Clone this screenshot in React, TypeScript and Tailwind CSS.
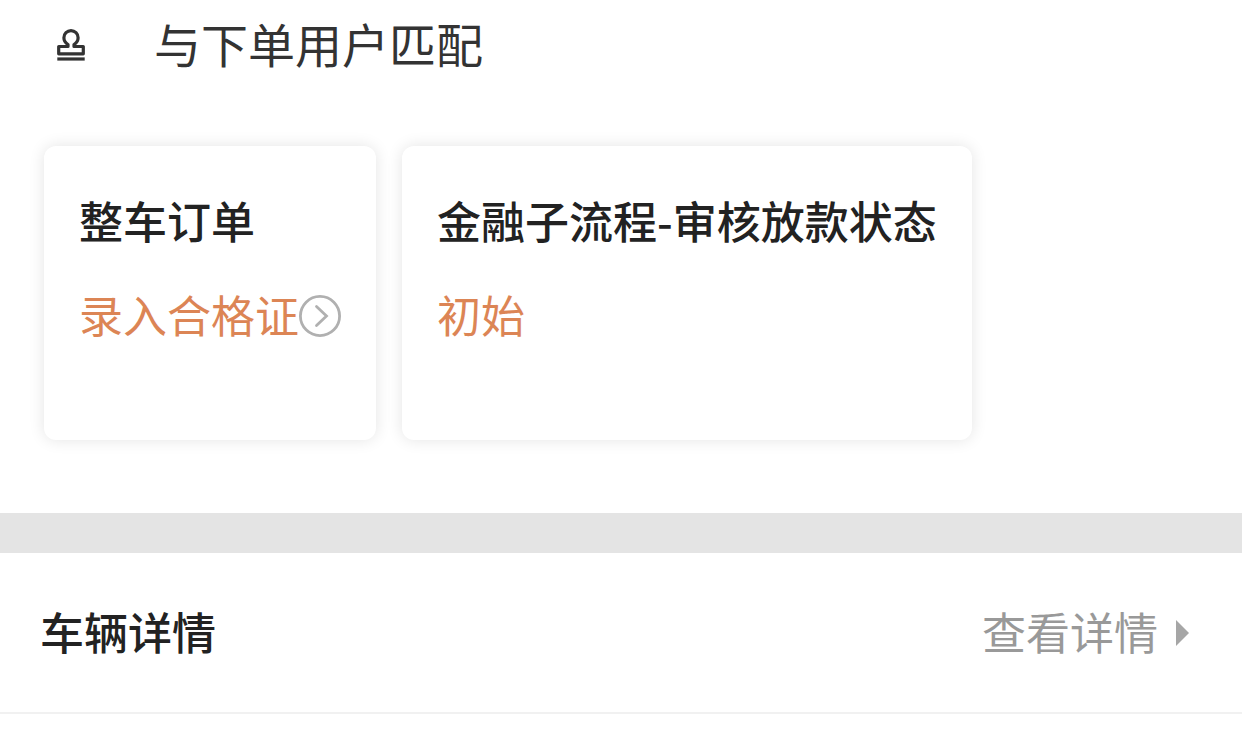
import type { ReactNode } from "react";

function StampIcon() {
  return (
    <svg viewBox="0 0 30 34" className="h-[34px] w-[30px] shrink-0" fill="none" stroke="#333333" strokeWidth="3.2" strokeLinejoin="round" aria-hidden="true">
      <path d="M12 18.500V16.500C9.500 15 7.900 12.500 7.900 9.700a7.100 7.100 0 0 1 14.200 0c0 2.800-1.600 5.300-4.100 6.800v2h9.300v7.300H2.700v-7.300z" />
      <path d="M1.300 31H28.700" />
    </svg>
  );
}

function Card({ title, children }: { title: string; children: ReactNode }) {
  return (
    <article className="h-[294px] rounded-xl bg-white px-[35px] pt-11 shadow-[0_0_16px_rgba(0,0,0,0.11)]">
      <h2 className="text-[44px] leading-[60px] font-medium text-[#222222]">{title}</h2>
      <div className="mt-[34px] flex items-center text-[44px] leading-[60px] text-[#dc8555]">{children}</div>
    </article>
  );
}

export default function App() {
  return (
    <main className="min-h-screen overflow-hidden bg-white font-['Noto_Sans_CJK_SC',sans-serif]">
      <section className="flex items-start gap-[68px] px-14 pt-2">
        <div className="pt-5">
          <StampIcon />
        </div>
        <p className="text-[47px] leading-[70px] text-[#333333]">与下单用户匹配</p>
      </section>
      <section className="flex items-start gap-[26px] px-11 pt-[68px] pb-[73px]">
        <Card title="整车订单">
          <span>录入合格证</span>
          <button type="button" aria-label="录入合格证" className="pt-1">
            <svg viewBox="0 0 42 42" className="size-[42px]" fill="none" stroke="#b0b0b0" strokeWidth="2.8" strokeLinecap="round" aria-hidden="true">
              <circle cx="21" cy="21" r="19.600" />
              <path d="M17.500 11.500l10 9.500-10 9.500" />
            </svg>
          </button>
        </Card>
        <Card title="金融子流程-审核放款状态">
          <span>初始</span>
        </Card>
      </section>
      <div className="h-10 bg-[#e4e4e4]" />
      <section className="flex h-[161px] items-center justify-between border-b-2 border-[#f1f1f1] pr-[53px] pb-1 pl-10">
        <h2 className="text-[44px] leading-[60px] font-medium text-[#222222]">车辆详情</h2>
        <a href="#details" className="flex items-center gap-[18px] text-[44px] leading-[60px] text-[#999999]">
          查看详情
          <svg viewBox="0 0 13 30" className="h-[30px] w-[13px]" fill="#a6a6a6" aria-hidden="true">
            <path d="M0 4l13 13L0 30z" />
          </svg>
        </a>
      </section>
    </main>
  );
}
